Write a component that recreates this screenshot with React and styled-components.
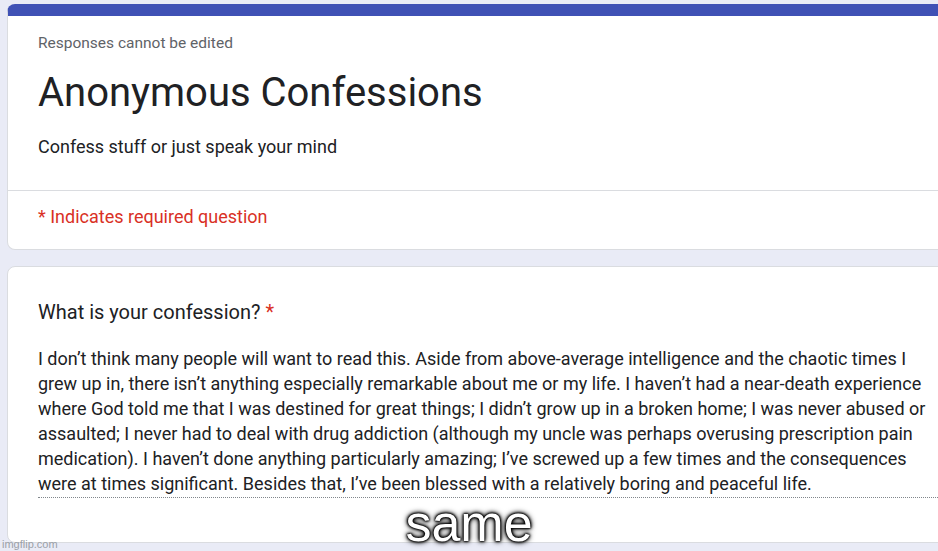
import styled, { createGlobalStyle } from "styled-components";

const GlobalStyle = createGlobalStyle`
  html, body {
    margin: 0;
    padding: 0;
    background: #e9ebf6;
    overflow: hidden;
  }
  body {
    font-family: Roboto, "Noto Sans", Arial, sans-serif;
    color: #202124;
  }
`;

const confession =
  "I don’t think many people will want to read this. Aside from above-average intelligence and the chaotic times I grew up in, there isn’t anything especially remarkable about me or my life. I haven’t had a near-death experience where God told me that I was destined for great things; I didn’t grow up in a broken home; I was never abused or assaulted; I never had to deal with drug addiction (although my uncle was perhaps overusing prescription pain medication). I haven’t done anything particularly amazing; I’ve screwed up a few times and the consequences were at times significant. Besides that, I’ve been blessed with a relatively boring and peaceful life.";

export default function App() {
  return (
    <>
      <GlobalStyle />
      <Page>
        <Card accent>
          <HeaderTop>
            <Notice>Responses cannot be edited</Notice>
            <Title>Anonymous Confessions</Title>
            <Description>Confess stuff or just speak your mind</Description>
          </HeaderTop>
          <Required>* Indicates required question</Required>
        </Card>
        <Card>
          <Question>
            What is your confession? <Star>*</Star>
          </Question>
          <Answer>{confession}</Answer>
        </Card>
        <Caption>same</Caption>
        <Watermark>imgflip.com</Watermark>
      </Page>
    </>
  );
}

const Page = styled.div`
  position: relative;
  width: 938px;
  height: 551px;
  padding: 4px 0 0 7px;
  box-sizing: border-box;
  display: flex;
  flex-direction: column;
  gap: 16px;
`;

const Card = styled.section`
  width: 960px;
  box-sizing: border-box;
  background: #fff;
  border: 1px solid #dadce0;
  border-radius: 8px;
  overflow: hidden;
  border-top: ${(props) => (props.accent ? "12px solid #3f51b5" : "1px solid #dadce0")};
  padding: ${(props) => (props.accent ? "0" : "32px 0 0 30px")};
  height: ${(props) => (props.accent ? "auto" : "277px")};
`;

const HeaderTop = styled.div`
  padding: 17px 30px 31px;
  border-bottom: 1px solid #dadce0;
`;

const Notice = styled.div`
  font-size: 15.5px;
  color: #5f6368;
  line-height: 20px;
`;

const Title = styled.h1`
  margin: 13px 0 0;
  font-size: 40px;
  font-weight: 400;
  line-height: 54px;
  color: #202124;
`;

const Description = styled.p`
  margin: 15px 0 0;
  font-size: 18px;
  line-height: 24px;
`;

const Required = styled.div`
  padding: 14px 30px 20px;
  font-size: 18px;
  line-height: 24px;
  color: #d93025;
`;

const Question = styled.h2`
  margin: 0;
  font-size: 20px;
  font-weight: 400;
  line-height: 26px;
  color: #202124;
`;

const Star = styled.span`
  color: #d93025;
`;

const Answer = styled.p`
  margin: 21px 0 0;
  width: 900px;
  font-size: 18px;
  line-height: 25px;
  color: #202124;
  padding-bottom: 1px;
  border-bottom: 1px dotted #80868b;
`;

const Caption = styled.div`
  position: absolute;
  left: 0;
  right: 0;
  top: 497px;
  text-align: center;
  font-family: "Liberation Sans", Arial, sans-serif;
  font-size: 52px;
  line-height: 52px;
  color: #fff;
  text-shadow: 0 0 2px #000, 0 0 2px #000, 0 0 3px #000, 0 0 4px #000,
    0 0 6px #000;
`;

const Watermark = styled.div`
  position: absolute;
  left: 2px;
  bottom: 1px;
  font-family: "Liberation Sans", Arial, sans-serif;
  font-size: 11px;
  color: #9aa0a6;
`;
